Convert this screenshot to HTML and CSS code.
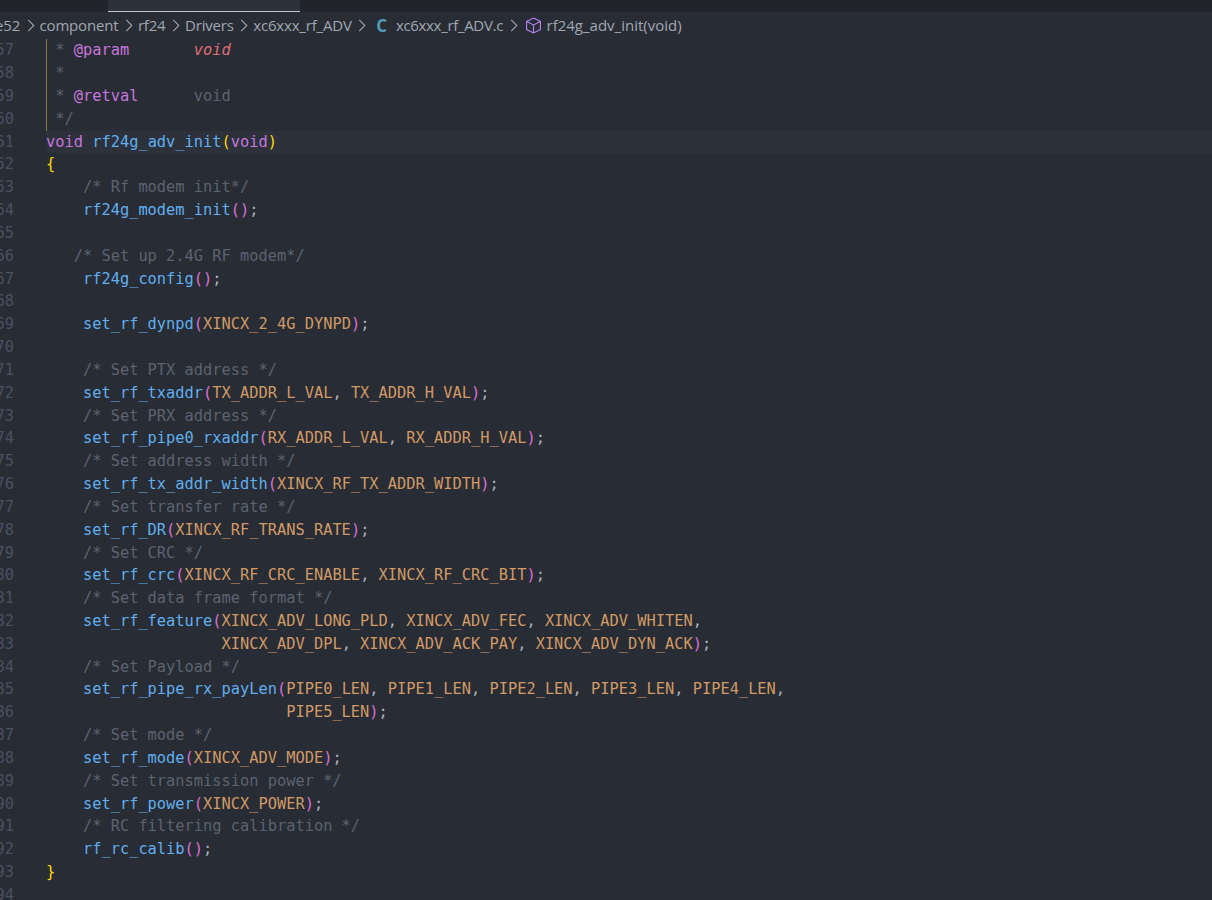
FILE: index.html
```html
<!DOCTYPE html>
<html lang="en">
<head>
    <meta charset="UTF-8">
    <title>xc6xxx_rf_ADV.c</title>
    <link rel="stylesheet" href="styles.css">
</head>
<body>
    <div class="tabs">
        <div class="tab"></div>
    </div>
    <nav class="crumbs">
        <span>e52</span>
        <svg class="chev" viewBox="0 0 8 14"><path d="M1 1l6 6-6 6"/></svg>
        <span>component</span>
        <svg class="chev" viewBox="0 0 8 14"><path d="M1 1l6 6-6 6"/></svg>
        <span>rf24</span>
        <svg class="chev" viewBox="0 0 8 14"><path d="M1 1l6 6-6 6"/></svg>
        <span>Drivers</span>
        <svg class="chev" viewBox="0 0 8 14"><path d="M1 1l6 6-6 6"/></svg>
        <span>xc6xxx_rf_ADV</span>
        <svg class="chev" viewBox="0 0 8 14"><path d="M1 1l6 6-6 6"/></svg>
        <b class="c-icon">C</b>
        <span class="file">xc6xxx_rf_ADV.c</span>
        <svg class="chev" viewBox="0 0 8 14"><path d="M1 1l6 6-6 6"/></svg>
        <svg class="cube" viewBox="0 0 16 16"><path d="M8 1l6.5 3.2v7.6L8 15l-6.5-3.2V4.200zM1.500 4.200L8 7.500l6.500-3.300M8 7.500V15"/></svg>
        <span class="sym">rf24g_adv_init(void)</span>
    </nav>
    <main class="editor">
        <div class="line guide"><i>157</i><code> * <a class="k">@param</a>       <a class="p">void</a></code></div>
        <div class="line guide"><i>158</i><code> *</code></div>
        <div class="line guide"><i>159</i><code> * <a class="k">@retval</a>      void</code></div>
        <div class="line guide"><i>160</i><code> */</code></div>
        <div class="line active"><i>161</i><code class="t"><a class="k">void</a> <a class="f">rf24g_adv_init</a><a class="b">(</a><a class="k">void</a><a class="b">)</a></code></div>
        <div class="line"><i>162</i><code class="t"><a class="b">{</a></code></div>
        <div class="line"><i>163</i><code>    /* Rf modem init*/</code></div>
        <div class="line"><i>164</i><code class="t">    <a class="f">rf24g_modem_init</a><a class="o">()</a>;</code></div>
        <div class="line"><i>165</i><code></code></div>
        <div class="line"><i>166</i><code>   /* Set up 2.4G RF modem*/</code></div>
        <div class="line"><i>167</i><code class="t">    <a class="f">rf24g_config</a><a class="o">()</a>;</code></div>
        <div class="line"><i>168</i><code></code></div>
        <div class="line"><i>169</i><code class="t">    <a class="f">set_rf_dynpd</a><a class="o">(</a><a class="m">XINCX_2_4G_DYNPD</a><a class="o">)</a>;</code></div>
        <div class="line"><i>170</i><code></code></div>
        <div class="line"><i>171</i><code>    /* Set PTX address */</code></div>
        <div class="line"><i>172</i><code class="t">    <a class="f">set_rf_txaddr</a><a class="o">(</a><a class="m">TX_ADDR_L_VAL</a>, <a class="m">TX_ADDR_H_VAL</a><a class="o">)</a>;</code></div>
        <div class="line"><i>173</i><code>    /* Set PRX address */</code></div>
        <div class="line"><i>174</i><code class="t">    <a class="f">set_rf_pipe0_rxaddr</a><a class="o">(</a><a class="m">RX_ADDR_L_VAL</a>, <a class="m">RX_ADDR_H_VAL</a><a class="o">)</a>;</code></div>
        <div class="line"><i>175</i><code>    /* Set address width */</code></div>
        <div class="line"><i>176</i><code class="t">    <a class="f">set_rf_tx_addr_width</a><a class="o">(</a><a class="m">XINCX_RF_TX_ADDR_WIDTH</a><a class="o">)</a>;</code></div>
        <div class="line"><i>177</i><code>    /* Set transfer rate */</code></div>
        <div class="line"><i>178</i><code class="t">    <a class="f">set_rf_DR</a><a class="o">(</a><a class="m">XINCX_RF_TRANS_RATE</a><a class="o">)</a>;</code></div>
        <div class="line"><i>179</i><code>    /* Set CRC */</code></div>
        <div class="line"><i>180</i><code class="t">    <a class="f">set_rf_crc</a><a class="o">(</a><a class="m">XINCX_RF_CRC_ENABLE</a>, <a class="m">XINCX_RF_CRC_BIT</a><a class="o">)</a>;</code></div>
        <div class="line"><i>181</i><code>    /* Set data frame format */</code></div>
        <div class="line"><i>182</i><code class="t">    <a class="f">set_rf_feature</a><a class="o">(</a><a class="m">XINCX_ADV_LONG_PLD</a>, <a class="m">XINCX_ADV_FEC</a>, <a class="m">XINCX_ADV_WHITEN</a>,</code></div>
        <div class="line"><i>183</i><code class="t">                   <a class="m">XINCX_ADV_DPL</a>, <a class="m">XINCX_ADV_ACK_PAY</a>, <a class="m">XINCX_ADV_DYN_ACK</a><a class="o">)</a>;</code></div>
        <div class="line"><i>184</i><code>    /* Set Payload */</code></div>
        <div class="line"><i>185</i><code class="t">    <a class="f">set_rf_pipe_rx_payLen</a><a class="o">(</a><a class="m">PIPE0_LEN</a>, <a class="m">PIPE1_LEN</a>, <a class="m">PIPE2_LEN</a>, <a class="m">PIPE3_LEN</a>, <a class="m">PIPE4_LEN</a>,</code></div>
        <div class="line"><i>186</i><code class="t">                          <a class="m">PIPE5_LEN</a><a class="o">)</a>;</code></div>
        <div class="line"><i>187</i><code>    /* Set mode */</code></div>
        <div class="line"><i>188</i><code class="t">    <a class="f">set_rf_mode</a><a class="o">(</a><a class="m">XINCX_ADV_MODE</a><a class="o">)</a>;</code></div>
        <div class="line"><i>189</i><code>    /* Set transmission power */</code></div>
        <div class="line"><i>190</i><code class="t">    <a class="f">set_rf_power</a><a class="o">(</a><a class="m">XINCX_POWER</a><a class="o">)</a>;</code></div>
        <div class="line"><i>191</i><code>    /* RC filtering calibration */</code></div>
        <div class="line"><i>192</i><code class="t">    <a class="f">rf_rc_calib</a><a class="o">()</a>;</code></div>
        <div class="line"><i>193</i><code class="t"><a class="b">}</a></code></div>
        <div class="line"><i>194</i><code></code></div>
    </main>
</body>
</html>
```
FILE: styles.css
```css
html, body {
    margin: 0;
    height: 100%;
    overflow: hidden;
}
body {
    background: #282c34;
    display: flex;
    flex-direction: column;
}
.tabs {
    height: 12px;
    flex: none;
    background: #21252b;
    padding-left: 108px;
    box-sizing: border-box;
}
.tab {
    width: 192px;
    height: 12px;
    box-sizing: border-box;
    background: #2c313a;
    border-bottom: 1px solid #c8c8c8;
}
.crumbs {
    height: 26px;
    flex: none;
    display: flex;
    align-items: center;
    margin-left: -5px;
    font: 15px "Open Sans", sans-serif;
    letter-spacing: -0.18px;
    color: #a0a6b2;
    white-space: nowrap;
}
.chev {
    width: 8px;
    height: 13px;
    margin: 0 5px 0 6.5px;
    fill: none;
    stroke: #9da5b4;
    stroke-width: 1.2;
}
.c-icon {
    font: bold 17px "Open Sans", sans-serif;
    color: #519aba;
    margin: 0 9px 0 5px;
}
.file {
    letter-spacing: -0.32px;
}
.sym {
    letter-spacing: 0;
}
.cube {
    width: 17px;
    height: 17px;
    margin: 0 5px 0 2px;
    fill: none;
    stroke: #b180f0;
    stroke-width: 1.1;
}
.editor {
    flex: 1;
    min-height: 0;
    padding-top: 1.3px;
    font: 15.35px/22.83px "DejaVu Sans Mono", monospace;
    color: #5c6370;
}
.line {
    display: flex;
    height: 22.83px;
}
.line i {
    width: 14px;
    flex: none;
    display: flex;
    justify-content: flex-end;
    margin-right: 32px;
    overflow: hidden;
    font-style: normal;
    color: #495162;
}
.line code {
    flex: 1;
    font: inherit;
    white-space: pre;
}
.line a {
    color: inherit;
}
.guide code {
    box-shadow: inset 1px 0 0 #7f7f3c;
}
.active code {
    background: #2c313c;
}
.t { color: #abb2bf; }
.line .k { color: #c678dd; }
.line .f { color: #61afef; }
.line .m { color: #d19a66; }
.line .p { color: #e06c75; font-style: italic; }
.line .b { color: #ffd700; }
.line .o { color: #da70d6; }
```
